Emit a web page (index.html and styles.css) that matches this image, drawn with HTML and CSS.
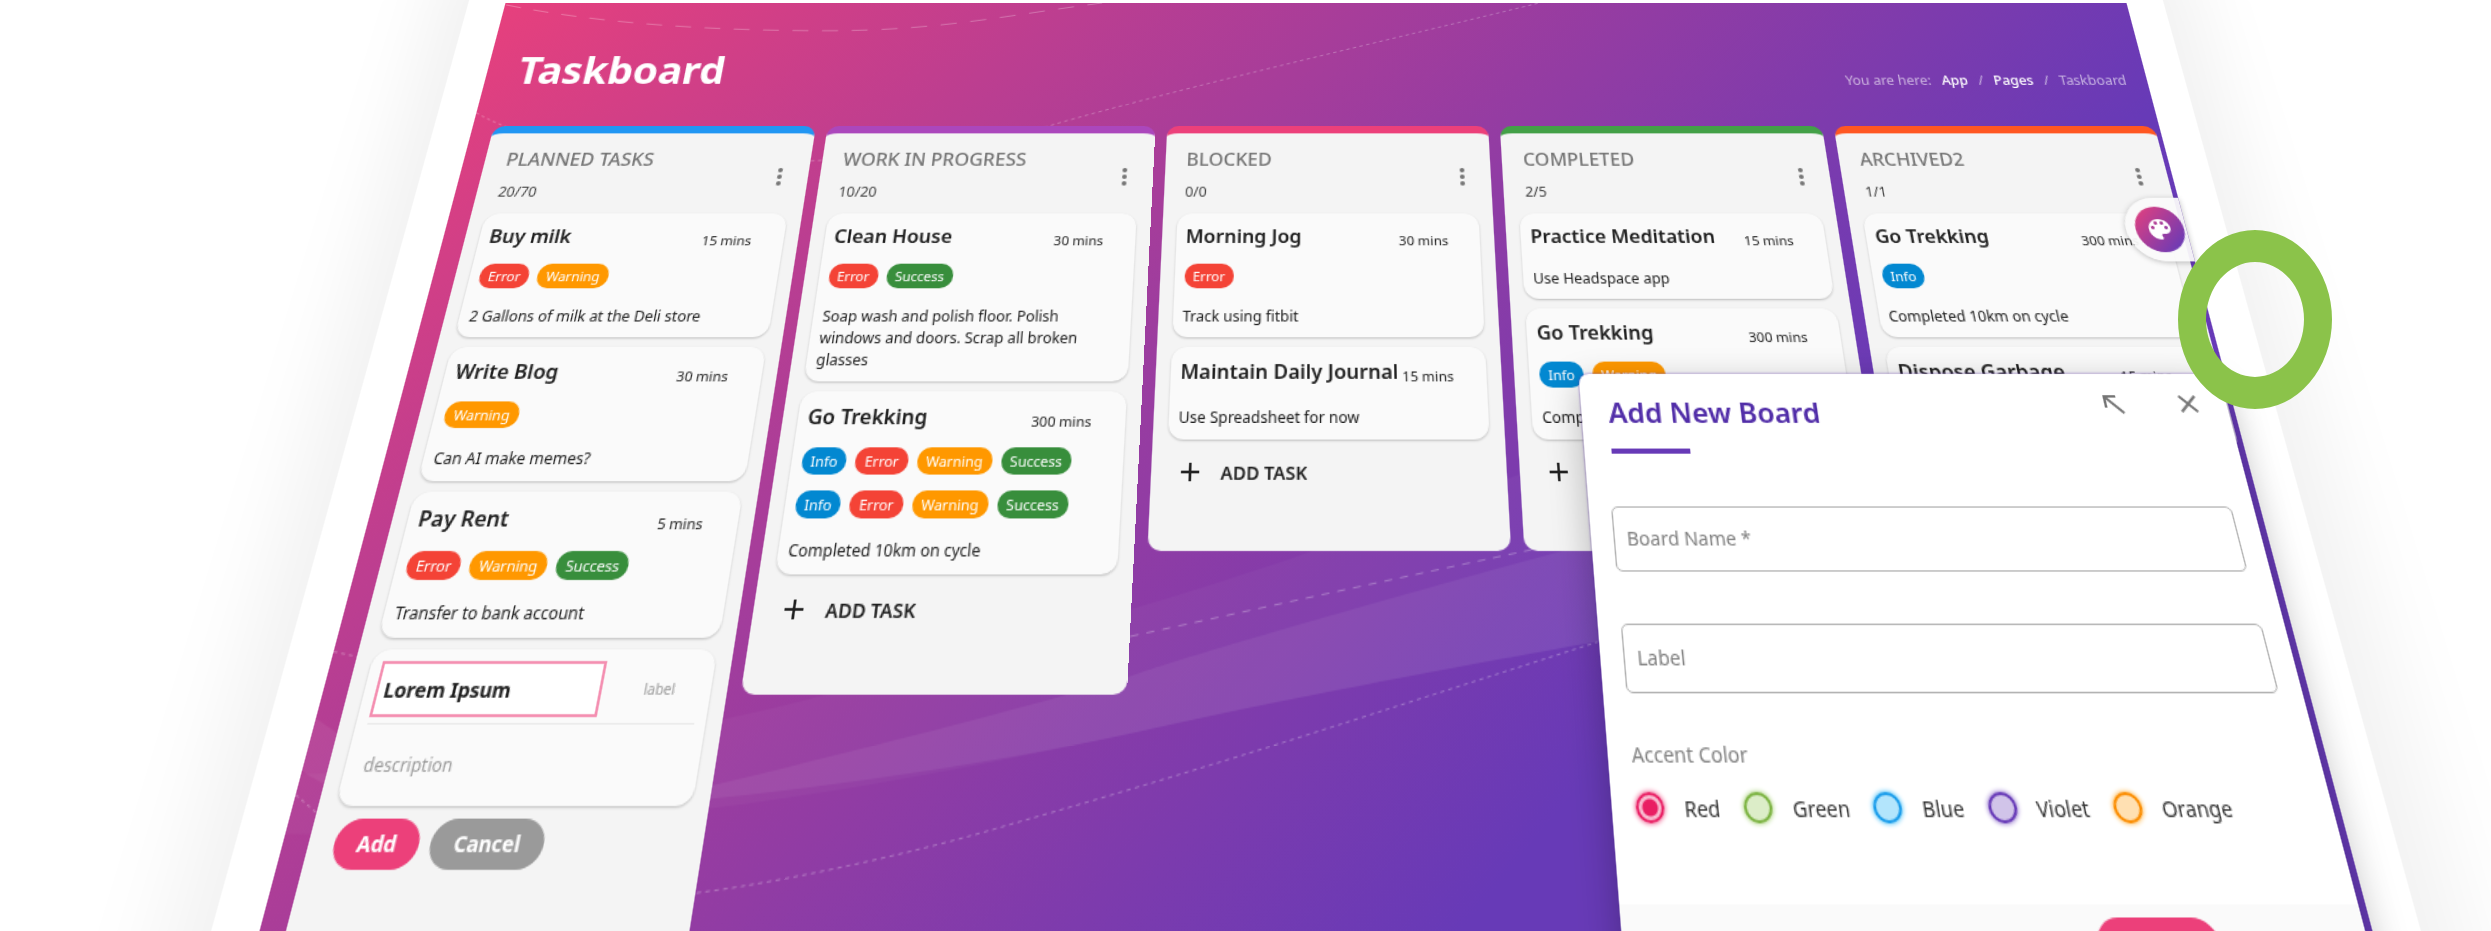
FILE: index.html
```html
<!DOCTYPE html>
<html lang="en">
<head>
<meta charset="utf-8">
<title>Taskboard</title>
<link rel="stylesheet" href="styles.css">
</head>
<body>
<svg class="sprite" aria-hidden="true">
  <symbol id="i-more" viewBox="0 0 24 24"><path d="M12 8a2 2 0 1 0 0-4 2 2 0 0 0 0 4zm0 2a2 2 0 1 0 0 4 2 2 0 0 0 0-4zm0 6a2 2 0 1 0 0 4 2 2 0 0 0 0-4z"/></symbol>
  <symbol id="i-plus" viewBox="0 0 24 24"><path d="M19 13h-6v6h-2v-6H5v-2h6V5h2v6h6v2z"/></symbol>
  <symbol id="i-close" viewBox="0 0 24 24"><path d="M19 6.41 17.59 5 12 10.59 6.41 5 5 6.41 10.59 12 5 17.59 6.41 19 12 13.41 17.59 19 19 17.59 13.41 12z"/></symbol>
  <symbol id="i-expand" viewBox="0 0 24 24"><path d="M15 5v2H8.41L20 18.59 18.59 20 7 8.41V15H5V5z"/></symbol>
  <symbol id="i-palette" viewBox="0 0 24 24"><path d="M12 3c-4.97 0-9 4.03-9 9s4.03 9 9 9c.83 0 1.5-.67 1.5-1.5 0-.39-.15-.74-.39-1.01-.23-.26-.38-.61-.38-.99 0-.83.67-1.5 1.5-1.5H16c2.76 0 5-2.24 5-5 0-4.42-4.03-8-9-8zm-5.5 9c-.83 0-1.5-.67-1.5-1.5S5.67 9 6.5 9 8 9.67 8 10.5 7.33 12 6.5 12zm3-4C8.67 8 8 7.33 8 6.5S8.67 5 9.500 5s1.500.67 1.500 1.500S10.330 8 9.500 8zm5 0c-.83 0-1.500-.67-1.500-1.500S13.670 5 14.500 5s1.500.67 1.500 1.500S15.330 8 14.500 8zm3 4c-.83 0-1.500-.67-1.500-1.500S16.670 9 17.500 9s1.500.67 1.500 1.500-.67 1.500-1.500 1.500z"/></symbol>
</svg>
<main class="scene">
  <div class="board">
    <svg class="waves" viewBox="0 0 1440 900" aria-hidden="true">
      <g transform="scale(1 .962)">
        <path class="band band-wide" d="M0 650 C100 650 190 636 291 613 C400 590 590 534 700 497 L960 400 V552 C781 583 689 601 594 621 S403 660 280 675 S80 690 0 690 Z"/>
        <path class="band" d="M0 612 C100 670 200 680 292 658 C414 629 544 596 592 580 S813 515 960 476 V552 C781 583 689 601 594 621 S403 656 280 668 S100 700 0 648 Z"/>
        <path class="dash" d="M1 2 C90 22 190 29 290 29 S450 12 530 0"/>
        <path class="dot" d="M0 112 C100 170 360 175 494 124 C600 88 800 34 918 0"/>
        <path class="dot" d="M0 565 L30 571 M0 664 L30 684"/>
        <path class="dash short" d="M560 559 C640 542 743 519 900 486"/>
        <path class="dot" d="M270 730 C330 726 440 703 508 683 C600 658 700 628 774 605 L927 558"/>
      </g>
    </svg>
    <header class="topbar">
      <h1 class="title">Taskboard</h1>
      <nav class="crumbs" aria-label="Breadcrumb">
        <span>You are here:</span>
        <a href="#">App</a><span>/</span><a href="#">Pages</a><span>/</span><span>Taskboard</span>
      </nav>
    </header>

    <div class="columns">
      <section class="column blue">
        <header class="column-head">
          <div><h2 class="column-title">PLANNED TASKS</h2><p class="count">20/70</p></div>
          <button class="menu" aria-label="Column menu"><svg class="icon"><use href="#i-more"/></svg></button>
        </header>
        <div class="cards">
          <article class="card">
            <div class="card-head"><h3 class="card-title">Buy milk</h3><span class="time">15 mins</span></div>
            <div class="tags"><span class="tag error">Error</span><span class="tag warning">Warning</span></div>
            <p class="desc">2 Gallons of milk at the Deli store</p>
          </article>
          <article class="card">
            <div class="card-head"><h3 class="card-title">Write Blog</h3><span class="time">30 mins</span></div>
            <div class="tags"><span class="tag warning">Warning</span></div>
            <p class="desc">Can AI make memes?</p>
          </article>
          <article class="card">
            <div class="card-head"><h3 class="card-title">Pay Rent</h3><span class="time">5 mins</span></div>
            <div class="tags"><span class="tag error">Error</span><span class="tag warning">Warning</span><span class="tag success">Success</span></div>
            <p class="desc">Transfer to bank account</p>
          </article>
          <form class="draft">
            <div class="draft-card">
              <div class="draft-row">
                <input class="draft-title" type="text" value="Lorem Ipsum" aria-label="Task title">
                <input class="draft-label" type="text" placeholder="label" aria-label="Task label">
              </div>
              <input class="draft-desc" type="text" placeholder="description" aria-label="Task description">
            </div>
            <div class="actions">
              <button class="btn pink" type="button">Add</button>
              <button class="btn grey" type="button">Cancel</button>
            </div>
          </form>
        </div>
      </section>

      <section class="column purple">
        <header class="column-head">
          <div><h2 class="column-title">WORK IN PROGRESS</h2><p class="count">10/20</p></div>
          <button class="menu" aria-label="Column menu"><svg class="icon"><use href="#i-more"/></svg></button>
        </header>
        <div class="cards">
          <article class="card">
            <div class="card-head"><h3 class="card-title">Clean House</h3><span class="time">30 mins</span></div>
            <div class="tags"><span class="tag error">Error</span><span class="tag success">Success</span></div>
            <p class="desc">Soap wash and polish floor. Polish windows and doors. Scrap all broken glasses</p>
          </article>
          <article class="card">
            <div class="card-head"><h3 class="card-title">Go Trekking</h3><span class="time">300 mins</span></div>
            <div class="tags"><span class="tag info">Info</span><span class="tag error">Error</span><span class="tag warning">Warning</span><span class="tag success">Success</span><span class="tag info">Info</span><span class="tag error">Error</span><span class="tag warning">Warning</span><span class="tag success">Success</span></div>
            <p class="desc">Completed 10km on cycle</p>
          </article>
        </div>
        <button class="add-task"><svg class="icon"><use href="#i-plus"/></svg>ADD TASK</button>
      </section>

      <section class="column pinkish">
        <header class="column-head">
          <div><h2 class="column-title">BLOCKED</h2><p class="count">0/0</p></div>
          <button class="menu" aria-label="Column menu"><svg class="icon"><use href="#i-more"/></svg></button>
        </header>
        <div class="cards">
          <article class="card">
            <div class="card-head"><h3 class="card-title">Morning Jog</h3><span class="time">30 mins</span></div>
            <div class="tags"><span class="tag error">Error</span></div>
            <p class="desc">Track using fitbit</p>
          </article>
          <article class="card">
            <div class="card-head"><h3 class="card-title">Maintain Daily Journal</h3><span class="time">15 mins</span></div>
            <p class="desc">Use Spreadsheet for now</p>
          </article>
        </div>
        <button class="add-task"><svg class="icon"><use href="#i-plus"/></svg>ADD TASK</button>
      </section>

      <section class="column green">
        <header class="column-head">
          <div><h2 class="column-title">COMPLETED</h2><p class="count">2/5</p></div>
          <button class="menu" aria-label="Column menu"><svg class="icon"><use href="#i-more"/></svg></button>
        </header>
        <div class="cards">
          <article class="card">
            <div class="card-head"><h3 class="card-title">Practice Meditation</h3><span class="time">15 mins</span></div>
            <p class="desc">Use Headspace app</p>
          </article>
          <article class="card">
            <div class="card-head"><h3 class="card-title">Go Trekking</h3><span class="time">300 mins</span></div>
            <div class="tags"><span class="tag info">Info</span><span class="tag warning">Warning</span></div>
            <p class="desc">Completed 10km on cycle</p>
          </article>
        </div>
        <button class="add-task"><svg class="icon"><use href="#i-plus"/></svg>ADD TASK</button>
      </section>

      <section class="column orange">
        <header class="column-head">
          <div><h2 class="column-title">ARCHIVED2</h2><p class="count">1/1</p></div>
          <button class="menu" aria-label="Column menu"><svg class="icon"><use href="#i-more"/></svg></button>
        </header>
        <div class="cards">
          <article class="card">
            <div class="card-head"><h3 class="card-title">Go Trekking</h3><span class="time">300 mins</span></div>
            <div class="tags"><span class="tag info">Info</span></div>
            <p class="desc">Completed 10km on cycle</p>
          </article>
          <article class="card">
            <div class="card-head"><h3 class="card-title">Dispose Garbage</h3><span class="time">15 mins</span></div>
          </article>
        </div>
      </section>
    </div>

    <div class="theme-tab">
      <button class="theme-button" aria-label="Theme colors"><svg class="icon"><use href="#i-palette"/></svg></button>
    </div>

    <form class="dialog" role="dialog" aria-labelledby="dialog-title">
      <header class="dialog-head">
        <h2 class="dialog-title" id="dialog-title">Add New Board</h2>
        <div class="dialog-tools">
          <button class="tool" type="button" aria-label="Expand"><svg class="icon"><use href="#i-expand"/></svg></button>
          <button class="tool" type="button" aria-label="Close"><svg class="icon"><use href="#i-close"/></svg></button>
        </div>
      </header>
      <div class="fields">
        <input class="field" type="text" placeholder="Board Name *" aria-label="Board Name" required>
        <input class="field" type="text" placeholder="Label" aria-label="Label">
      </div>
      <fieldset class="accent">
        <legend class="accent-title">Accent Color</legend>
        <div class="options">
          <label class="option"><input class="radio red" type="radio" name="accent" checked>Red</label>
          <label class="option"><input class="radio lime" type="radio" name="accent">Green</label>
          <label class="option"><input class="radio sky" type="radio" name="accent">Blue</label>
          <label class="option"><input class="radio violet" type="radio" name="accent">Violet</label>
          <label class="option"><input class="radio amber" type="radio" name="accent">Orange</label>
        </div>
      </fieldset>
      <footer class="dialog-foot">
        <button class="btn pink save" type="button" aria-label="Add board"></button>
      </footer>
    </form>
  </div>
  <div class="ring"></div>
</main>
</body>
</html>
```

FILE: styles.css
```css
* { box-sizing: border-box; }

body {
  margin: 0;
  background: #fff;
  color: #212121;
  font-family: "Noto Sans", "Open Sans", sans-serif;
  font-size: 12px;
}

h1, h2, h3, p { margin: 0; }
button, input { font: inherit; color: inherit; }
button { border: 0; padding: 0; background: none; cursor: pointer; }

.sprite { position: absolute; width: 0; height: 0; }
.icon { display: block; width: 24px; height: 24px; fill: currentColor; }

.scene {
  position: relative;
  height: 100vh;
  padding: 3px 0 0 140px;
  overflow: hidden;
}

/* The board lies on a plane that leans away from the viewer. */
.board {
  position: relative;
  width: 62%;
  max-width: 1440px;
  min-height: 100vh;
  margin: 0 auto;
  background: linear-gradient(135deg, #e6407d 0, #673ab7 1090px);
  box-shadow: 0 0 0 33px #fff, 0 0 64px 60px rgba(0, 0, 0, .06);
  transform-origin: 50% 0;
  transform: perspective(1695px) rotateX(29deg) scale(1.1257);
}

.waves { position: absolute; inset: 0 0 auto 0; width: 100%; height: auto; }
.band { fill: rgba(255, 255, 255, .06); }
.band-wide { fill: rgba(255, 255, 255, .03); }
.dash, .dot { fill: none; stroke: rgba(255, 255, 255, .3); stroke-width: 1; }
.dash { stroke-dasharray: 14 12; }
.dash.short { stroke-dasharray: 6 6; }
.dot { stroke-dasharray: 3 3; }

.topbar {
  position: relative;
  display: flex;
  justify-content: space-between;
  align-items: flex-end;
  padding: 43px 18px 29px 27px;
  color: #fff;
}
.title { font-size: 35px; line-height: 48px; font-weight: 700; }
.crumbs { display: flex; gap: 9px; line-height: 28px; color: rgba(255, 255, 255, .6); }
.crumbs a { color: #fff; font-weight: 500; text-decoration: none; }

.columns {
  position: relative;
  display: grid;
  grid-template-columns: 1fr 280px 1fr 1fr 1fr;
  align-items: start;
  gap: 10px;
  padding: 0 4px 0 18px;
}
.column {
  padding: 0 12px 42px;
  border-top: 7px solid;
  border-radius: 10px;
  background: #f4f4f4;
}
.blue { padding-bottom: 80px; border-color: #2196f3; }
.purple { border-color: #ab47bc; }
.pinkish { border-color: #ec407a; }
.green { border-color: #43a047; }
.orange { border-color: #ff5722; }

.column-head {
  display: flex;
  justify-content: space-between;
  align-items: flex-start;
  padding: 12px 0 10px 6px;
  color: #757575;
}
.column-title { margin-bottom: 9px; font-size: 16px; line-height: 24px; font-weight: 500; }
.count { line-height: 18px; color: #424242; }
.menu { margin-top: 16px; }

.cards { display: grid; gap: 8px; }
.card, .draft-card {
  border-radius: 12px;
  background: #fafafa;
  box-shadow: 0 1px 2px rgba(0, 0, 0, .22);
}
.card { padding: 8px; }
.card-head {
  display: flex;
  justify-content: space-between;
  align-items: flex-end;
  padding-right: 18px;
}
.card-title { font-size: 16px; line-height: 24px; font-weight: 600; white-space: nowrap; }
.time { font-size: 11px; line-height: 16px; white-space: nowrap; }
.tags { display: flex; flex-wrap: wrap; gap: 12px 7px; margin-top: 12px; }
.tag {
  padding: 0 7px;
  border-radius: 10px;
  color: #fff;
  font-size: 11px;
  line-height: 21px;
}
.error { background: #f44336; }
.warning { background: #ff9800; }
.success { background: #388e3c; }
.info { background: #0288d1; }
.desc { margin-top: 16px; line-height: 18px; }
.tags + .desc { margin-top: 15px; }

.add-task {
  display: flex;
  align-items: center;
  gap: 12px;
  height: 34px;
  margin-top: 8px;
  padding-left: 6px;
  font-size: 14px;
  font-weight: 600;
}

.draft { display: grid; gap: 8px; }
.draft-row {
  display: flex;
  justify-content: space-between;
  align-items: center;
  margin: 0 8px;
  padding: 8px 16px 4px 0;
  border-bottom: 1px solid #e8e8e8;
}
.draft-title {
  width: 164px;
  height: 38px;
  padding: 0 4px;
  border: 2px solid #f48fb1;
  background: #fff;
  font-size: 14px;
  font-weight: 700;
}
.draft-label { width: 24px; padding: 0; border: 0; background: none; font-size: 10px; }
.draft-desc { width: 100%; height: 53px; padding: 0 13px; border: 0; background: none; }
.draft ::placeholder { color: #9a9a9a; opacity: 1; }
.actions { display: flex; gap: 8px; padding-left: 6px; }
.btn {
  padding: 0 16px;
  border-radius: 16px;
  color: #fff;
  font-size: 14px;
  line-height: 32px;
  font-weight: 700;
}
.pink { background: #ec407a; }
.grey { background: #9a9a9a; }

.theme-tab {
  position: absolute;
  top: 186px;
  right: 0;
  padding: 8px 2px 8px 8px;
  border-radius: 28px 0 0 28px;
  background: rgba(250, 250, 250, .94);
  box-shadow: 0 1px 5px rgba(0, 0, 0, .25);
}
.theme-button {
  display: grid;
  place-items: center;
  width: 40px;
  height: 40px;
  border-radius: 50%;
  background: linear-gradient(135deg, #ec407a 0, #673ab7 90%);
  color: #fff;
}

.dialog {
  position: absolute;
  top: 336px;
  right: 5px;
  width: 507px;
  border-radius: 8px;
  background: #fff;
  box-shadow: 0 8px 28px rgba(0, 0, 0, .28), 0 0 2px #673ab7;
  overflow: hidden;
}
.dialog-head {
  display: flex;
  justify-content: space-between;
  padding: 12px 18px 0 21px;
  color: #757575;
}
.dialog-title { margin-top: 4px; color: #512da8; font-size: 22px; line-height: 28px; font-weight: 600; }
.dialog-title::after {
  content: "";
  display: block;
  width: 61px;
  height: 4px;
  margin-top: 15px;
  background: #673ab7;
}
.dialog-tools { display: flex; gap: 35px; align-items: flex-start; }
.fields { display: grid; gap: 37px; padding: 40px 17px 0; }
.field {
  height: 48px;
  padding: 0 9px 2px;
  border: 1px solid #b0b0b0;
  border-radius: 5px;
  background: #fff;
  font-size: 14px;
}
.field::placeholder { color: #808080; opacity: 1; }
.accent { margin: 31px 17px 47px; padding: 0; border: 0; }
.accent-title { padding: 0; color: #808080; font-size: 14px; line-height: 20px; }
.options { display: flex; gap: 17px; margin-top: 11px; }
.option { display: flex; align-items: center; gap: 14px; height: 26px; font-size: 14px; color: #333; }
.radio {
  appearance: none;
  width: 20px;
  height: 20px;
  margin: 0;
  border: 2px solid;
  border-radius: 50%;
}
.red { color: #e91e63; background: radial-gradient(#e91e63 5px, #f8bbd0 6px); box-shadow: 0 0 3px 1px #f48fb1; }
.lime { color: #7cb342; background: #dcedc8; box-shadow: 0 0 3px 1px #c5e1a5; }
.sky { color: #1a9cea; background: #b3e5fc; box-shadow: 0 0 3px 1px #81d4fa; }
.violet { color: #673ab7; background: #d1c4e9; box-shadow: 0 0 3px 1px #b39ddb; }
.amber { color: #fb8c00; background: #ffe0b2; box-shadow: 0 0 3px 1px #ffcc80; }
.dialog-foot {
  display: flex;
  justify-content: flex-end;
  padding: 8px 100px 16px;
  background: #fafafa;
}
.save { width: 84px; height: 34px; border-radius: 17px; }

/* Highlight ring that floats over the tilted board. */
.ring {
  position: absolute;
  top: 230px;
  left: calc(50% + 932px);
  width: 154px;
  height: 179px;
  border: solid #8bc34a;
  border-width: 32px 28px;
  border-radius: 50%;
}
```
